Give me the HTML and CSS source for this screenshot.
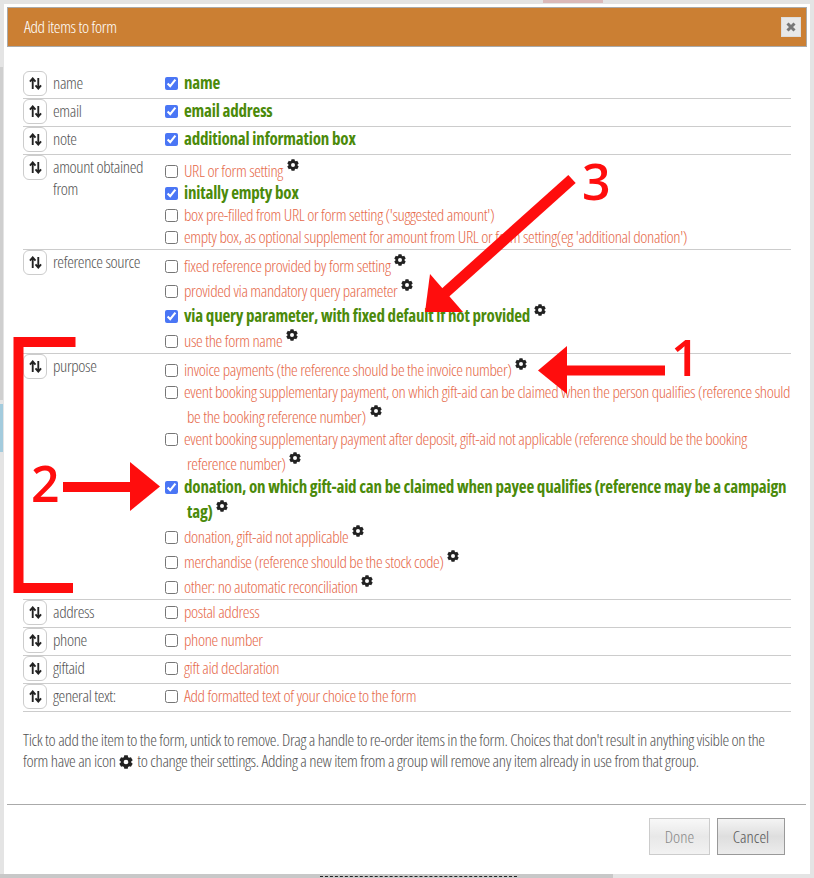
FILE: index.html
```html
<!DOCTYPE html>
<html lang="en">
<head>
    <meta charset="UTF-8">
    <meta name="viewport" content="width=device-width, initial-scale=1.0">
    <title>Add items to form</title>
    <link rel="stylesheet" href="styles.css">
</head>
<body>
    <svg class="icon-defs" aria-hidden="true">
        <symbol id="gear" viewBox="0 0 24 24">
            <circle cx="12" cy="12" r="6.5" fill="none" stroke="currentColor" stroke-width="5"/>
            <g fill="currentColor">
                <path id="tooth" d="M9 0.5h6l1 5h-8z"/>
                <use href="#tooth" transform="rotate(60 12 12)"/>
                <use href="#tooth" transform="rotate(120 12 12)"/>
                <use href="#tooth" transform="rotate(180 12 12)"/>
                <use href="#tooth" transform="rotate(240 12 12)"/>
                <use href="#tooth" transform="rotate(300 12 12)"/>
            </g>
        </symbol>
        <symbol id="updown" viewBox="0 0 14 14">
            <path d="M4 13V2M1 5l3-3.5L7 5M10 1v11M7 9l3 3.5L13 9" fill="none" stroke="currentColor" stroke-width="2"/>
        </symbol>
    </svg>

    <div class="scrap scrap-top"></div>
    <div class="scrap scrap-grey"></div>
    <div class="scrap scrap-blue"></div>
    <div class="scrap scrap-foot"></div>
    <div class="scrap scrap-dash"></div>

    <div class="dialog">
        <div class="dialog-title">
            <span>Add items to form</span>
            <button class="close-btn" aria-label="Close">
                <svg width="10" height="10" viewBox="0 0 10 10"><path d="M1.500 1.500l7 7M8.500 1.500l-7 7" stroke="currentColor" stroke-width="3"/></svg>
            </button>
        </div>

        <div class="dialog-body">
            <div class="item-row">
                <div class="item-name"><button class="handle"><svg><use href="#updown"/></svg></button><span>name</span></div>
                <div class="choices">
                    <label class="choice on"><input type="checkbox" checked>name</label>
                </div>
            </div>
            <div class="item-row">
                <div class="item-name"><button class="handle"><svg><use href="#updown"/></svg></button><span>email</span></div>
                <div class="choices">
                    <label class="choice on"><input type="checkbox" checked>email address</label>
                </div>
            </div>
            <div class="item-row">
                <div class="item-name"><button class="handle"><svg><use href="#updown"/></svg></button><span>note</span></div>
                <div class="choices">
                    <label class="choice on"><input type="checkbox" checked>additional information box</label>
                </div>
            </div>
            <div class="item-row group">
                <div class="item-name"><button class="handle"><svg><use href="#updown"/></svg></button><span>amount obtained from</span></div>
                <div class="choices">
                    <label class="choice"><input type="checkbox">URL or form setting <svg class="gear"><use href="#gear"/></svg></label>
                    <label class="choice on"><input type="checkbox" checked>initally empty box</label>
                    <label class="choice"><input type="checkbox">box pre-filled from URL or form setting ('suggested amount')</label>
                    <label class="choice"><input type="checkbox">empty box, as optional supplement for amount from URL or form setting(eg 'additional donation')</label>
                </div>
            </div>
            <div class="item-row group">
                <div class="item-name"><button class="handle"><svg><use href="#updown"/></svg></button><span>reference source</span></div>
                <div class="choices">
                    <label class="choice"><input type="checkbox">fixed reference provided by form setting <svg class="gear"><use href="#gear"/></svg></label>
                    <label class="choice"><input type="checkbox">provided via mandatory query parameter <svg class="gear"><use href="#gear"/></svg></label>
                    <label class="choice on"><input type="checkbox" checked>via query parameter, with fixed default if not provided <svg class="gear"><use href="#gear"/></svg></label>
                    <label class="choice"><input type="checkbox">use the form name <svg class="gear"><use href="#gear"/></svg></label>
                </div>
            </div>
            <div class="item-row group">
                <div class="item-name"><button class="handle"><svg><use href="#updown"/></svg></button><span>purpose</span></div>
                <div class="choices">
                    <label class="choice"><input type="checkbox">invoice payments (the reference should be the invoice number) <svg class="gear"><use href="#gear"/></svg></label>
                    <label class="choice"><input type="checkbox">event booking supplementary payment, on which gift-aid can be claimed when the person qualifies (reference should be the booking reference number) <svg class="gear"><use href="#gear"/></svg></label>
                    <label class="choice"><input type="checkbox">event booking supplementary payment after deposit, gift-aid not applicable (reference should be the booking reference number) <svg class="gear"><use href="#gear"/></svg></label>
                    <label class="choice on wrapped"><input type="checkbox" checked>donation, on which gift-aid can be claimed when payee qualifies (reference may be a campaign tag) <svg class="gear"><use href="#gear"/></svg></label>
                    <label class="choice"><input type="checkbox">donation, gift-aid not applicable <svg class="gear"><use href="#gear"/></svg></label>
                    <label class="choice"><input type="checkbox">merchandise (reference should be the stock code) <svg class="gear"><use href="#gear"/></svg></label>
                    <label class="choice"><input type="checkbox">other: no automatic reconciliation <svg class="gear"><use href="#gear"/></svg></label>
                </div>
            </div>
            <div class="item-row">
                <div class="item-name"><button class="handle"><svg><use href="#updown"/></svg></button><span>address</span></div>
                <div class="choices">
                    <label class="choice"><input type="checkbox">postal address</label>
                </div>
            </div>
            <div class="item-row">
                <div class="item-name"><button class="handle"><svg><use href="#updown"/></svg></button><span>phone</span></div>
                <div class="choices">
                    <label class="choice"><input type="checkbox">phone number</label>
                </div>
            </div>
            <div class="item-row">
                <div class="item-name"><button class="handle"><svg><use href="#updown"/></svg></button><span>giftaid</span></div>
                <div class="choices">
                    <label class="choice"><input type="checkbox">gift aid declaration</label>
                </div>
            </div>
            <div class="item-row">
                <div class="item-name"><button class="handle"><svg><use href="#updown"/></svg></button><span>general text:</span></div>
                <div class="choices">
                    <label class="choice"><input type="checkbox">Add formatted text of your choice to the form</label>
                </div>
            </div>

            <p class="help">Tick to add the item to the form, untick to remove. Drag a handle to re-order items in the form. Choices that don't result in anything visible on the form have an icon <svg class="gear gear-inline"><use href="#gear"/></svg> to change their settings. Adding a new item from a group will remove any item already in use from that group.</p>
        </div>

        <div class="dialog-footer">
            <button class="btn" disabled>Done</button>
            <button class="btn">Cancel</button>
        </div>
    </div>

    <!-- red annotations drawn on top of the screenshot -->
    <svg class="marks" viewBox="0 0 814 878">
        <path d="M572 179L445 293" stroke="#ff0d0d" stroke-width="11" fill="none"/>
        <polygon points="430,274 463,312 425,312"/>
        <rect x="565" y="365.500" width="100" height="10"/>
        <polygon points="538,370.500 567,346 567,394"/>
        <rect x="63" y="482" width="68" height="10"/>
        <polygon points="160,486.500 130,462 130,511"/>
        <path d="M75.500 342H18.500V588H73" stroke="#ff0d0d" stroke-width="10" fill="none"/>
        <text x="671" y="376">1</text>
        <text x="31" y="502">2</text>
        <text x="582" y="200">3</text>
    </svg>
</body>
</html>
```

FILE: styles.css
```css
* {
    box-sizing: border-box;
}
body {
    margin: 0;
    width: 814px;
    height: 878px;
    padding: 4px;
    position: relative;
    overflow: hidden;
    font-family: "Open Sans", sans-serif;
    font-stretch: 75%;
    font-size: 17px;
    font-weight: 300;
    letter-spacing: -0.37px;
    color: #555;
    background-color: #e4e4e4;
}
.icon-defs {
    position: absolute;
    width: 0;
    height: 0;
}
.scrap {
    position: absolute;
}
.scrap-top {
    left: 543px;
    top: 0;
    width: 60px;
    height: 3px;
    background-color: #dbb9b9;
}
.scrap-grey {
    left: 0;
    top: 67px;
    width: 3px;
    height: 333px;
    background-color: #cfcfcf;
}
.scrap-blue {
    left: 0;
    top: 404px;
    width: 3px;
    height: 48px;
    background-color: #a3cbdd;
}
.scrap-foot {
    left: 0;
    bottom: 0;
    width: 613px;
    height: 4px;
    background-color: #c8c8c8;
}
.scrap-dash {
    left: 320px;
    bottom: 0;
    width: 197px;
    height: 2px;
    border-top: 1px dashed #222;
}

.dialog {
    position: relative;
    width: 806px;
    height: 870px;
    padding: 3px 3px 0;
    background-color: #fff;
    display: flex;
    flex-direction: column;
}
.dialog-title {
    height: 40px;
    padding: 0 5px 1px 16px;
    display: flex;
    align-items: center;
    justify-content: space-between;
    color: #fff;
    background-color: #cb7f33;
    border: 1px solid #aaa;
}
.close-btn {
    width: 20px;
    height: 20px;
    padding: 0;
    display: flex;
    align-items: center;
    justify-content: center;
    color: #777;
    background-color: #e8e8e8;
    border: 1px solid #ddd;
}
.dialog-body {
    flex: 1;
    padding: 24px 16px 0 16px;
}
.item-row {
    display: flex;
    min-height: 28px;
    padding-bottom: 1px;
    border-bottom: 1px solid #ccc;
}
.item-name {
    width: 142px;
    flex-shrink: 0;
    display: flex;
    align-items: flex-start;
    gap: 6px;
    line-height: 22px;
}
.item-name span {
    padding-top: 1px;
    width: 100px;
}
.handle {
    width: 24px;
    height: 25px;
    padding: 0;
    flex-shrink: 0;
    display: flex;
    align-items: center;
    justify-content: center;
    color: #222;
    background-color: #fff;
    border: 1px solid #ccc;
    border-radius: 6px;
}
.handle svg {
    width: 13px;
    height: 13px;
}
.choices {
    flex: 1;
    padding-top: 1px;
}
.group .choices {
    padding-top: 2px;
}
.choice {
    display: block;
    padding-left: 22px;
    line-height: 22px;
    color: #e66a4b;
    text-indent: -22px;
}
.choice input {
    width: 13px;
    height: 13px;
    margin: 0 6px 0 0;
    vertical-align: -1px;
    accent-color: #4a76f5;
}
.choice.on {
    font-weight: 700;
    letter-spacing: -0.19px;
    color: #4b8a0a;
}
.choice.wrapped {
    margin-top: 1px;
}
.gear {
    width: 12px;
    height: 12px;
    margin: 2px 0 0 1px;
    color: #222;
    vertical-align: 6px;
}
.gear-inline {
    width: 14px;
    height: 14px;
    margin: 0 1px;
    vertical-align: -2px;
}
.help {
    margin: 17px 0 0;
    line-height: 21px;
}
.dialog-footer {
    height: 70px;
    margin: 0 1px 0 0;
    padding: 13px 21px 0 0;
    display: flex;
    justify-content: flex-end;
    gap: 7px;
    border-top: 1px solid #aaa;
}
.btn {
    width: 68px;
    height: 37px;
    font: inherit;
    color: #555;
    background: linear-gradient(#f4f4f4, #dedede 50%, #ececec);
    border: 1px solid #999;
}
.btn:disabled {
    width: 61px;
    color: #888;
    background: linear-gradient(#f8f8f8, #e8e8e8 50%, #f2f2f2);
    border-color: #ccc;
}

.marks {
    position: absolute;
    left: 0;
    top: 0;
    width: 814px;
    height: 878px;
    fill: #ff0d0d;
    pointer-events: none;
}
.marks text {
    font-size: 50px;
    font-weight: 600;
    font-stretch: 100%;
    letter-spacing: 0;
}
```
